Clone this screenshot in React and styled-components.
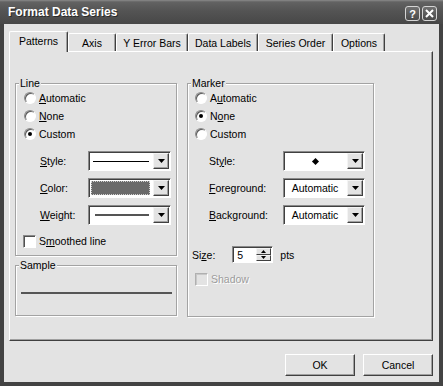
import styled, { createGlobalStyle } from "styled-components";

const GlobalStyle = createGlobalStyle`
  html, body {
    margin: 0;
    padding: 0;
    background: #3f3f3f;
  }
  body {
    font-family: "Liberation Sans", Arial, sans-serif;
    font-size: 10.5px;
    color: #000;
  }
`

const FACE = "#e3e3e3"

const Window = styled.div`
  width: 443px;
  height: 386px;
  display: flex;
  flex-direction: column;
  background: #434343;
`

const TitleBar = styled.div`
  height: 24px;
  flex: none;
  display: flex;
  align-items: center;
  justify-content: space-between;
  padding: 0 6px 0 8px;
  background: linear-gradient(#8a8a8a 0, #626262 2px, #545454 45%, #474747 100%);
`

const Title = styled.span`
  color: #fff;
  font-weight: bold;
  font-size: 12px;
  text-shadow: 1px 1px 0 #2a2a2a;
`

const CaptionButtons = styled.div`
  display: flex;
  gap: 2px;
  margin-top: 3px;
`

const CaptionButton = styled.div`
  width: 15px;
  height: 15px;
  box-sizing: border-box;
  border: 1px solid #d5d5d5;
  border-radius: 3px;
  background: linear-gradient(#707070, #4a4a4a);
  color: #fff;
  font-weight: bold;
  font-size: 11px;
  display: flex;
  align-items: center;
  justify-content: center;
`

const Client = styled.div`
  flex: 1;
  margin: 0 4px 4px;
  background: ${FACE};
  padding: 7px 6px 0 5px;
  display: flex;
  flex-direction: column;
`

const TabStrip = styled.div`
  display: flex;
  align-items: flex-end;
  height: 20px;
`

const Tab = styled.div`
  width: ${p => p.$width}px;
  height: ${p => (p.$active ? 21 : 18)}px;
  margin-bottom: ${p => (p.$active ? -1 : 0)}px;
  position: relative;
  z-index: ${p => (p.$active ? 1 : 0)};
  box-sizing: border-box;
  background: ${FACE};
  border-top: 1px solid #fff;
  border-left: 1px solid #fff;
  border-right: 1px solid #404040;
  box-shadow: inset -1px 0 0 #a0a0a0;
  border-radius: 2px 2px 0 0;
  display: flex;
  align-items: center;
  justify-content: center;
  padding-bottom: ${p => (p.$active ? 2 : 0)}px;
`

const Panel = styled.div`
  height: 290px;
  box-sizing: border-box;
  border-top: 1px solid #fff;
  border-left: 1px solid #fff;
  border-right: 1px solid #404040;
  border-bottom: 1px solid #404040;
  box-shadow: inset -1px -1px 0 #a0a0a0;
  padding: 31px 0 0 5px;
`

const Columns = styled.div`
  display: flex;
  gap: 10px;
  align-items: flex-start;
`

const Column = styled.div`
  display: flex;
  flex-direction: column;
`

const Group = styled.div`
  width: ${p => p.$width}px;
  height: ${p => p.$height}px;
  margin-top: ${p => p.$top || 0}px;
  box-sizing: border-box;
  border: 1px solid #a3a3a3;
  box-shadow: inset 1px 1px 0 #fff, 1px 1px 0 #fff;
  padding-left: ${p => p.$pad}px;
  display: flex;
  flex-direction: column;
`

const GroupTitle = styled.div`
  margin: -7px 0 -1px ${p => 3 - p.$pad}px;
  padding: 0 1px;
  width: fit-content;
  line-height: 13px;
  background: ${FACE};
`

const OptionRow = styled.div`
  display: flex;
  align-items: center;
  gap: 3px;
  height: ${p => p.$height || 18}px;
  margin-top: ${p => p.$top || 0}px;
  margin-left: ${p => p.$shift || 0}px;
  color: ${p => (p.$disabled ? "#9c9c9c" : "#000")};
  text-shadow: ${p => (p.$disabled ? "1px 1px 0 #fff" : "none")};
`

const Radio = styled.span`
  width: 12px;
  height: 12px;
  box-sizing: border-box;
  border-radius: 50%;
  border: 1px solid;
  border-color: #8a8a8a #fff #fff #8a8a8a;
  box-shadow: inset 1px 1px 0 #5a5a5a;
  background: #fff;
  display: flex;
  align-items: center;
  justify-content: center;

  &::after {
    content: "";
    width: 4px;
    height: 4px;
    border-radius: 50%;
    background: ${p => (p.$checked ? "#000" : "transparent")};
  }
`

const Checkbox = styled.span`
  width: 13px;
  height: 13px;
  box-sizing: border-box;
  border: 1px solid;
  border-color: ${p => (p.$disabled ? "#b0b0b0 #fff #fff #b0b0b0" : "#8a8a8a #fff #fff #8a8a8a")};
  box-shadow: inset 1px 1px 0 ${p => (p.$disabled ? "#c8c8c8" : "#505050")};
  background: ${p => (p.$disabled ? FACE : "#fff")};
`

const Key = styled.span`
  text-decoration: underline;
`

const FieldRow = styled.div`
  display: flex;
  align-items: center;
  height: 20px;
  margin-top: ${p => p.$top || 0}px;
  padding-left: ${p => p.$indent}px;
`

const FieldLabel = styled.span`
  width: ${p => p.$width}px;
  flex: none;
`

const Combo = styled.div`
  width: ${p => p.$width}px;
  height: 20px;
  box-sizing: border-box;
  border: 1px solid;
  border-color: #8a8a8a #fff #fff #8a8a8a;
  box-shadow: inset 1px 1px 0 #404040;
  background: #fff;
  padding: 1px 1px 1px 1px;
  display: flex;
`

const ComboValue = styled.div`
  flex: 1;
  display: flex;
  align-items: center;
  justify-content: center;
  padding-right: 2px;
`

const ComboButton = styled.div`
  width: 16px;
  flex: none;
  box-sizing: border-box;
  border: 1px solid;
  border-color: #f4f4f4 #404040 #404040 #f4f4f4;
  box-shadow: inset -1px -1px 0 #a0a0a0;
  background: ${FACE};
  display: flex;
  align-items: center;
  justify-content: center;
`

const LineSample = styled.div`
  width: ${p => p.$width}px;
  height: ${p => p.$thick}px;
  background: ${p => p.$color};
  margin-left: ${p => p.$left || 0}px;
`

const Swatch = styled.div`
  flex: 1;
  margin: 1px 3px 1px 1px;
  background: #6a6a6a;
  border: 1px dotted #d0d0d0;
`

const Diamond = styled.div`
  width: 5px;
  height: 5px;
  background: #000;
  transform: rotate(45deg);
`

const SampleLine = styled.div`
  height: 2px;
  margin: 21px 4px 0 4px;
  background: #555;
`

const SizeRow = styled.div`
  display: flex;
  align-items: center;
  margin-top: 21px;
  margin-left: -3px;
`

const Spin = styled.div`
  width: 41px;
  height: 17px;
  box-sizing: border-box;
  margin-left: 17px;
  border: 1px solid;
  border-color: #8a8a8a #fff #fff #8a8a8a;
  box-shadow: inset 1px 1px 0 #404040;
  background: #fff;
  padding: 1px;
  display: flex;
`

const SpinValue = styled.div`
  flex: 1;
  padding-left: 3px;
  line-height: 14px;
`

const SpinButtons = styled.div`
  width: 15px;
  display: flex;
  flex-direction: column;
`

const SpinButton = styled.div`
  flex: 1;
  box-sizing: border-box;
  border: 1px solid;
  border-color: #f4f4f4 #404040 #404040 #f4f4f4;
  background: ${FACE};
  display: flex;
  align-items: center;
  justify-content: center;
`

const Unit = styled.span`
  margin-left: 7px;
`

const Footer = styled.div`
  display: flex;
  justify-content: flex-end;
  gap: 8px;
  margin-top: 13px;
`

const Button = styled.div`
  width: 70px;
  height: 22px;
  box-sizing: border-box;
  border: 1px solid;
  border-color: #fff #404040 #404040 #fff;
  box-shadow: inset -1px -1px 0 #a0a0a0;
  background: ${FACE};
  display: flex;
  align-items: center;
  justify-content: center;
`

function Arrow({ up, size = 7 }) {
  const h = Math.ceil(size / 2)
  return (
    <svg width={size} height={h} viewBox={`0 0 ${size} ${h}`}>
      <polygon
        points={up ? `0,${h} ${size},${h} ${size / 2},0` : `0,0 ${size},0 ${size / 2},${h}`}
        fill="#000"
      />
    </svg>
  )
}

function Dropdown({ width, children }) {
  return (
    <Combo $width={width}>
      {children}
      <ComboButton>
        <Arrow />
      </ComboButton>
    </Combo>
  )
}

const tabs = [
  { label: "Patterns", width: 59 },
  { label: "Axis", width: 48 },
  { label: "Y Error Bars", width: 72 },
  { label: "Data Labels", width: 70 },
  { label: "Series Order", width: 75 },
  { label: "Options", width: 52 },
]

export default function App() {
  return (
    <>
      <GlobalStyle />
      <Window>
        <TitleBar>
          <Title>Format Data Series</Title>
          <CaptionButtons>
            <CaptionButton>?</CaptionButton>
            <CaptionButton>
              <svg width="9" height="9" viewBox="0 0 9 9">
                <path d="M1 1 L8 8 M8 1 L1 8" stroke="#fff" strokeWidth="2" />
              </svg>
            </CaptionButton>
          </CaptionButtons>
        </TitleBar>

        <Client>
          <TabStrip>
            {tabs.map((t, i) => (
              <Tab key={t.label} $width={t.width} $active={i === 0}>
                {t.label}
              </Tab>
            ))}
          </TabStrip>

          <Panel>
            <Columns>
              <Column>
                <Group $width={162} $height={173} $pad={8}>
                  <GroupTitle $pad={8}>Line</GroupTitle>
                  <OptionRow><Radio /><span><Key>A</Key>utomatic</span></OptionRow>
                  <OptionRow><Radio /><span><Key>N</Key>one</span></OptionRow>
                  <OptionRow><Radio $checked />Custom</OptionRow>

                  <FieldRow $top={8} $indent={16}>
                    <FieldLabel $width={48}><Key>S</Key>tyle:</FieldLabel>
                    <Dropdown width={83}>
                      <ComboValue>
                        <LineSample $width={56} $thick={1} $color="#000" />
                      </ComboValue>
                    </Dropdown>
                  </FieldRow>
                  <FieldRow $top={7} $indent={16}>
                    <FieldLabel $width={48}><Key>C</Key>olor:</FieldLabel>
                    <Dropdown width={83}>
                      <Swatch />
                    </Dropdown>
                  </FieldRow>
                  <FieldRow $top={7} $indent={16}>
                    <FieldLabel $width={48}><Key>W</Key>eight:</FieldLabel>
                    <Dropdown width={83}>
                      <ComboValue>
                        <LineSample $width={54} $thick={2} $color="#555" $left={2} />
                      </ComboValue>
                    </Dropdown>
                  </FieldRow>

                  <OptionRow $top={9} $height={14} $shift={-1}>
                    <Checkbox />
                    <span>S<Key>m</Key>oothed line</span>
                  </OptionRow>
                </Group>

                <Group $width={162} $height={51} $pad={1} $top={9}>
                  <GroupTitle $pad={1}>Sample</GroupTitle>
                  <SampleLine />
                </Group>
              </Column>

              <Group $width={187} $height={234} $pad={7}>
                <GroupTitle $pad={7}>Marker</GroupTitle>
                <OptionRow><Radio /><span>A<Key>u</Key>tomatic</span></OptionRow>
                <OptionRow><Radio $checked /><span>N<Key>o</Key>ne</span></OptionRow>
                <OptionRow><Radio />Custom</OptionRow>

                <FieldRow $top={8} $indent={14}>
                  <FieldLabel $width={74}>St<Key>y</Key>le:</FieldLabel>
                  <Dropdown width={82}>
                    <ComboValue>
                      <Diamond />
                    </ComboValue>
                  </Dropdown>
                </FieldRow>
                <FieldRow $top={7} $indent={14}>
                  <FieldLabel $width={74}><Key>F</Key>oreground:</FieldLabel>
                  <Dropdown width={82}>
                    <ComboValue>Automatic</ComboValue>
                  </Dropdown>
                </FieldRow>
                <FieldRow $top={7} $indent={14}>
                  <FieldLabel $width={74}><Key>B</Key>ackground:</FieldLabel>
                  <Dropdown width={82}>
                    <ComboValue>Automatic</ComboValue>
                  </Dropdown>
                </FieldRow>

                <SizeRow>
                  <span>Si<Key>z</Key>e:</span>
                  <Spin>
                    <SpinValue>5</SpinValue>
                    <SpinButtons>
                      <SpinButton><Arrow up size={5} /></SpinButton>
                      <SpinButton><Arrow size={5} /></SpinButton>
                    </SpinButtons>
                  </Spin>
                  <Unit>pts</Unit>
                </SizeRow>

                <OptionRow $top={9} $height={14} $disabled>
                  <Checkbox $disabled />
                  <span>Shadow</span>
                </OptionRow>
              </Group>
            </Columns>
          </Panel>

          <Footer>
            <Button>OK</Button>
            <Button>Cancel</Button>
          </Footer>
        </Client>
      </Window>
    </>
  )
}
